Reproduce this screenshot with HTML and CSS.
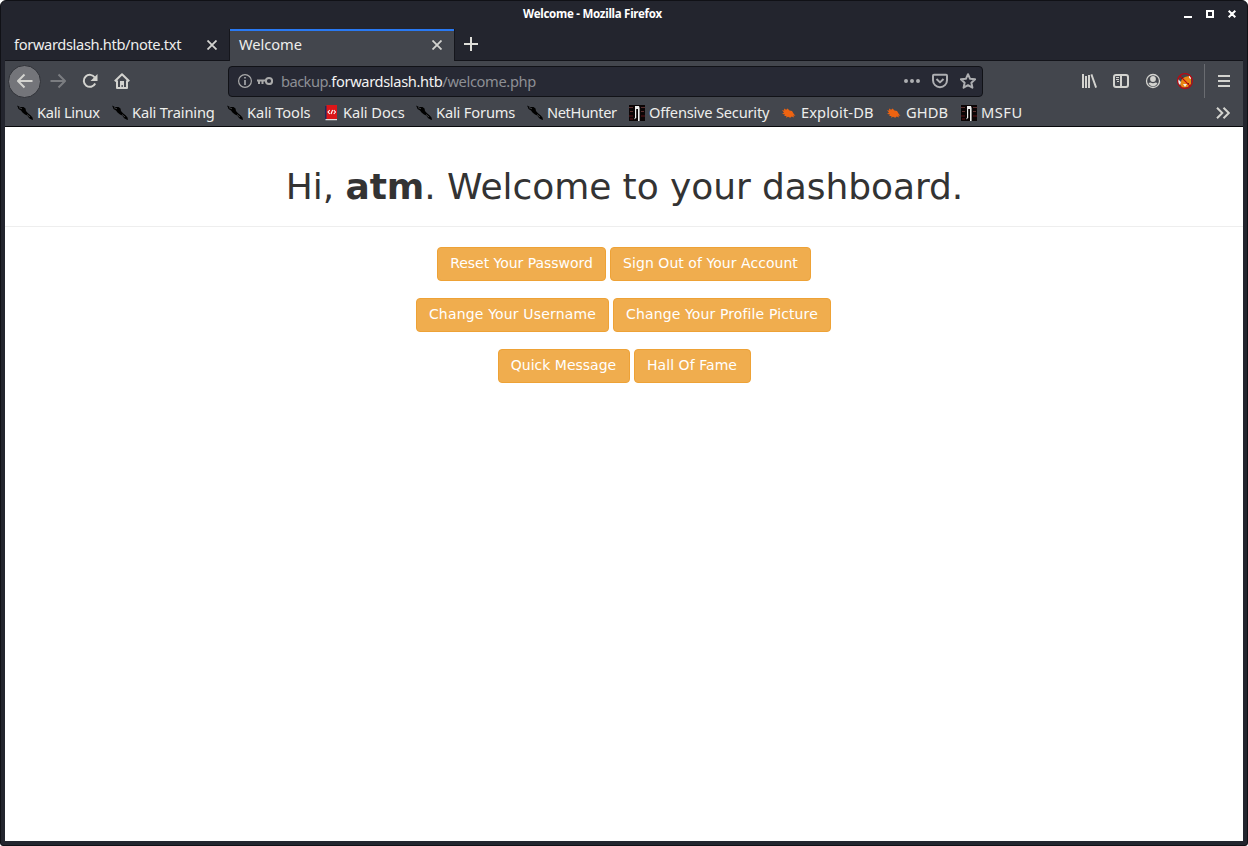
FILE: index.html
```html
<!DOCTYPE html>
<html lang="en">
<head>
<meta charset="utf-8">
<title>Welcome</title>
<link rel="stylesheet" href="styles.css">
</head>
<body>
<svg class="defs" aria-hidden="true">
  <symbol id="kali" viewBox="0 0 16 16"><path fill="#000" d="M0 .5l3 1.500 3.500 0 2 1.500 .5 2.500 2 2.300 2.500 2 2 2.200.5 2.500-1.500-.5-2.300-1.300-2-2.700-2.200-1L5.500 7.500 4 5.500 1.500 4 1 2.500z"/><path stroke="#6b6d73" stroke-width=".6" fill="none" d="M2 2.600l3 1.200M10 9.500l3 2.500"/></symbol>
  <symbol id="docs" viewBox="0 0 16 16"><path fill="#20295c" d="M2 1h3v13.500H2z"/><path fill="#dc1619" d="M3.500 0H14v14H3.500z"/><path fill="#ddd" d="M2.500 14H14v1.300H2.500z"/><path fill="none" stroke="#fff" stroke-width="1.100" d="M6.800 5L5 7l1.800 2M10.700 5l1.800 2-1.800 2M8 9l1.600-4"/></symbol>
  <symbol id="offsec" viewBox="0 0 16 16"><path fill="#0b0506" d="M0 0h16v16H0z"/><path stroke="#5b3030" stroke-width="1.200" d="M0 2.500h4M12 2.500h4M1 6.500h3M12 6.500h3"/><path stroke="#350b0e" stroke-width="2" d="M0 11h4M12 11h4M1 14h3"/><path fill="#eee" d="M6 1h4l.6 2v13H9V4H7.200v9L5 14.500l1-2z"/></symbol>
  <symbol id="bug" viewBox="0 0 16 16"><path fill="#ed6311" d="M1 5l2.200.8L3 3.500l2.200 1.300L6.500 3.500l2 2L11 6l2 3.200 1.500 1.600-2.300-.2 1 2-2.500-1-1.500 1.200-2.200-1-2 1 .5-1.700L3.200 11l.8-1.600L1 8.700l2-.9z"/></symbol>
</svg>
<div class="window">
  <header class="titlebar">
    <span class="title">Welcome - Mozilla Firefox</span>
    <svg class="controls" viewBox="0 0 56 12"><path fill="#fff" d="M0 8h8v2H0z"/><path fill="none" stroke="#fff" stroke-width="2" d="M23 3h6v6h-6zM44.700 2.700l6.600 6.600M51.300 2.700l-6.600 6.600"/></svg>
  </header>
  <nav class="tabs">
    <div class="tab"><span class="note">forwardslash.htb/note.txt</span><svg class="close" viewBox="0 0 10 10"><path d="M.5.500l9 9M9.500.500l-9 9"/></svg></div>
    <div class="tab active"><span class="current">Welcome</span><svg class="close" viewBox="0 0 10 10"><path d="M.5.500l9 9M9.500.500l-9 9"/></svg></div>
    <svg class="plus" viewBox="0 0 14 14"><path d="M7 0v14M0 7h14"/></svg>
  </nav>
  <div class="toolbar">
    <div class="nav">
      <span class="back"><svg class="i" viewBox="0 0 16 16"><path d="M15.500 8H1M7.500 1.500L1 8l6.500 6.500"/></svg></span>
      <svg class="i dim" viewBox="0 0 16 16"><path d="M.5 8H15M8.500 1.500L15 8l-6.500 6.500"/></svg>
      <svg class="i" viewBox="0 0 16 16"><path d="M13.200 10.500A6 6 0 1 1 12.800 4.500"/><path class="solid" d="M15.500 1v7h-7z"/></svg>
      <svg class="i" viewBox="0 0 16 16"><path d="M.8 8.300L8 1.200l7.200 7.100M3 7.500V15h10V7.500"/><path class="solid" d="M6 8h4v7H8.800v-3H7.500v3H6z"/></svg>
    </div>
    <div class="url">
      <svg class="info" viewBox="0 0 14 14"><circle cx="7" cy="7" r="6.400"/><path class="solid" d="M6.200 3h1.600v1.600H6.200zM6.200 6h1.600v5H6.200z"/></svg>
      <svg class="key" viewBox="0 0 16 10"><circle cx="12" cy="5" r="3.100"/><path d="M0 4.500h9M2 4v4M5.500 4v4"/></svg>
      <span class="address"><span class="sub">backup.</span><b>forwardslash.htb</b>/welcome.php</span>
      <svg class="dots" viewBox="0 0 16 16"><path class="solid" d="M0 8a2 2 0 1 0 4 0 2 2 0 1 0-4 0M6 8a2 2 0 1 0 4 0 2 2 0 1 0-4 0M12 8a2 2 0 1 0 4 0 2 2 0 1 0-4 0"/></svg>
      <svg class="i mid" viewBox="0 0 16 16"><path d="M2 1.800h12q1 0 1 1v4.400a7 7 0 0 1-14 0V2.800q0-1 1-1zM4.500 6L8 9.400 11.500 6"/></svg>
      <svg class="i mid" viewBox="0 0 16 16"><path d="M8 1.200l2.100 4.600 5 .5-3.700 3.400 1 5L8 12.200l-4.400 2.500 1-5L.9 6.300l5-.5z"/></svg>
    </div>
    <div class="actions">
      <svg class="i" viewBox="0 0 16 16"><path class="solid" d="M1 1h2v14H1zM4 3h2v12H4zM7 2h2v13H7zM9.500 1.700l1.800-.7L16 14.300l-1.800.7z"/></svg>
      <svg class="i" viewBox="0 0 16 16"><rect x="1" y="2" width="14" height="12" rx="2"/><path d="M8 2v12"/><path class="thin" d="M3 4.500h3M3 6.500h3M4 8.500h2"/></svg>
      <svg class="i" viewBox="0 0 16 16"><circle class="ring" cx="8" cy="8" r="6.500"/><circle class="solid" cx="8" cy="6" r="2.900"/><path class="solid" d="M3.500 10q1-.5 2-.5 2.500 1.400 5 0 1 0 2 .5-1.500 3.200-4.500 3.200T3.500 10z"/></svg>
      <svg class="i" viewBox="0 0 16 16"><path fill="#e98612" stroke="none" d="M3 11l2-5 3-2 4-1 2 2v6l-3 3-6 1z"/><path fill="#eee" stroke="none" d="M1 6l3 3-1 3-2-2zM12 2l2 2v2l-2-1zM6 11l4 0-2 3z"/><path fill="#5a2a20" stroke="none" d="M4 4h2v2H4zM10 10h2v1h-2z"/><path class="ban" d="M2.700 2.700l10.600 10.600M15.400 8A7.400 7.400 0 1 1 .6 8a7.400 7.400 0 1 1 14.800 0z"/></svg>
    </div>
    <div class="menu"><svg viewBox="0 0 12 12"><path d="M0 1h12M0 6h12M0 11h12"/></svg></div>
  </div>
  <nav class="bookmarks">
    <a class="linux"><svg><use href="#kali"/></svg>Kali Linux</a>
    <a class="training"><svg><use href="#kali"/></svg>Kali Training</a>
    <a><svg><use href="#kali"/></svg>Kali Tools</a>
    <a><svg><use href="#docs"/></svg>Kali Docs</a>
    <a class="training"><svg><use href="#kali"/></svg>Kali Forums</a>
    <a class="hunter"><svg><use href="#kali"/></svg>NetHunter</a>
    <a class="security"><svg><use href="#offsec"/></svg>Offensive Security</a>
    <a class="exploit"><svg><use href="#bug"/></svg>Exploit-DB</a>
    <a class="exploit"><svg><use href="#bug"/></svg>GHDB</a>
    <a class="msfu"><svg><use href="#offsec"/></svg>MSFU</a>
    <svg class="more" viewBox="0 0 14 12"><path d="M1 .7L6.300 6 1 11.300M7.500 .7L12.800 6 7.500 11.300"/></svg>
  </nav>
  <main class="page">
    <div class="page-header"><h1>Hi, <b>atm</b>. Welcome to your dashboard.</h1></div>
    <p><a class="btn reset">Reset Your Password</a><a class="btn signout">Sign Out of Your Account</a></p>
    <p><a class="btn username">Change Your Username</a><a class="btn picture">Change Your Profile Picture</a></p>
    <p><a class="btn message">Quick Message</a><a class="btn fame">Hall Of Fame</a></p>
  </main>
</div>
</body>
</html>
```
FILE: styles.css
```css
* { box-sizing: border-box; }
html { background: #fff; }
body { margin: 0; font: 14.67px/20px "Noto Sans", sans-serif; color: #eeeeec; }
.defs { display: none; }
svg { display: block; flex: none; fill: none; }
.window { width: 1248px; height: 846px; background: #23252e; border: 1px solid #101116; border-radius: 6px 6px 3px 3px; padding: 0 4px 4px; overflow: hidden; display: flex; flex-direction: column; }
.titlebar { height: 28px; display: flex; align-items: flex-start; padding-top: 3px; flex: none; }
.title { margin: 0 auto 0 518px; font-size: 11.5px; font-weight: 700; color: #fff; white-space: nowrap; letter-spacing: -.26px; }
.controls { width: 56px; height: 12px; margin: 4px 3px 0 0; }
.tabs { height: 32px; display: flex; border-bottom: 1px solid #13141a; flex: none; }
.tab { width: 224px; height: 31px; display: flex; align-items: center; justify-content: space-between; padding: 1px 12px 0 9px; }
.tab span { padding-bottom: 2px; }
.tab.active { width: 226px; height: 32px; background: #43464d; border: solid #15161c; border-width: 0 1px; box-shadow: inset 0 2px #2979f2; }
.note { letter-spacing: -.36px; }
.tab .current { letter-spacing: -.05px; padding-bottom: 3px; }
.close { width: 10px; height: 10px; stroke: #d3d3d0; stroke-width: 1.8; }
.active .close { margin-bottom: 1px; }
.plus { width: 14px; height: 14px; stroke: #deded9; stroke-width: 2; margin: 8px 0 0 9px; }
.toolbar { height: 40px; background: #43464d; display: flex; align-items: center; flex: none; }
.nav { width: 223px; display: flex; align-items: center; gap: 16px; padding-left: 4px; }
.back { width: 33px; height: 33px; border-radius: 50%; background: #74757a; border: 1px solid #303238; display: grid; place-items: center; margin-left: -1px; }
.back + .i { margin-left: -7px; }
.i { width: 16px; height: 16px; stroke: #d3d3cf; stroke-width: 2; stroke-linejoin: round; }
.dim { stroke: #7b7d81; }
.solid { fill: #d3d3cf; stroke: none; }
.thin { stroke-width: 1; }
.ring { stroke-width: 1.3; }
.url { width: 755px; height: 31px; background: #272934; border: 1px solid #111217; border-radius: 4px; display: flex; align-items: center; padding: 0 6px 0 9px; }
.info { width: 14px; height: 14px; stroke: #aaa; stroke-width: 1.2; }
.key { width: 16px; height: 10px; margin-left: 5px; stroke: #aaa; stroke-width: 2; }
.address { color: #8d8f94; margin: 0 auto 1px 8px; letter-spacing: -.36px; }
.sub { letter-spacing: -.55px; }
.address b { color: #f2f2f2; font-weight: 400; }
.dots { width: 16px; height: 16px; margin-right: 12px; }
.url .solid { fill: #adaeb1; }
.mid { stroke: #adaeb1; }
.mid + .mid { margin-left: 12px; }
.actions { margin-left: 98px; display: flex; gap: 16px; }
.ban { stroke: #bb0911; stroke-width: 1.2; }
.menu { height: 34px; margin-left: 11px; padding-left: 13px; border-left: 1px solid #6a6c71; display: flex; align-items: center; }
.menu svg { width: 12px; height: 12px; stroke: #d3d3cf; stroke-width: 2; }
.bookmarks { height: 26px; background: #43464d; border-bottom: 1px solid #07080b; display: grid; grid-template-columns: 95px 115px 96px 93px 111px 102px 152px 105px 75px 1fr auto; align-items: center; padding: 0 13px 3px 12px; flex: none; }
.bookmarks a { display: flex; align-items: center; gap: 4px; white-space: nowrap; letter-spacing: -.08px; }
.bookmarks a svg { width: 16px; height: 16px; margin-top: 1px; }
.bookmarks .linux { letter-spacing: -.33px; }
.bookmarks .training { letter-spacing: -.16px; }
.bookmarks .hunter { letter-spacing: -.4px; }
.bookmarks .security { letter-spacing: -.22px; }
.bookmarks .exploit { letter-spacing: .1px; }
.bookmarks .msfu { letter-spacing: .5px; }
.more { width: 14px; height: 12px; margin-top: 1px; stroke: #d3d3cf; stroke-width: 2; }
.page { flex: 1; background: #fff; color: #333; font: 14px/20px "DejaVu Sans", sans-serif; text-align: center; }
.page-header { margin: 40px 0 20px; height: 60px; border-bottom: 1px solid #eee; }
h1 { margin: 0; padding-left: 1px; font-size: 36px; line-height: 39.6px; font-weight: 500; letter-spacing: -.07px; }
p { margin: 0 0 17px; height: 34px; display: flex; justify-content: center; gap: 4px; }
.btn { height: 34px; padding: 5px 0 7px; border: 1px solid #eea236; border-radius: 4px; background: #f0ad4e; color: #fff; white-space: nowrap; }
.reset { width: 169px; letter-spacing: -.04px; }
.signout { width: 201px; letter-spacing: .05px; }
.username { width: 193px; letter-spacing: .17px; margin-left: -1px; }
.picture { width: 218px; letter-spacing: .12px; }
.message { width: 132px; }
.fame { width: 117px; letter-spacing: .06px; }
```
